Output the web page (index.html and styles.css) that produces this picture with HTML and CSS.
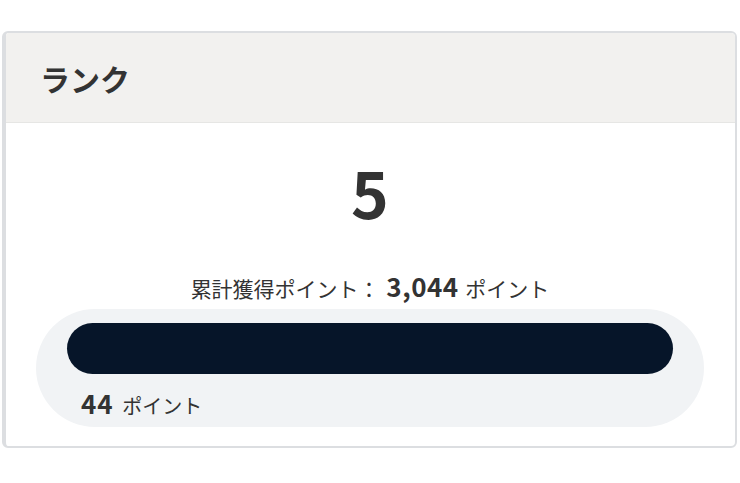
FILE: index.html
```html
<!DOCTYPE html>
<html lang="ja">
<head>
    <meta charset="UTF-8">
    <link rel="stylesheet" href="styles.css">
</head>
<body>
    <div class="rank-card">
        <div class="rank-header">
            <h2>ランク</h2>
        </div>
        <div class="rank-body">
            <div class="rank-value">5</div>
            <p class="total">累計獲得ポイント： <strong>3,044</strong> ポイント</p>
            <div class="track">
                <div class="bar" style="width: 100%"></div>
                <p class="remain"><strong>44</strong> ポイント</p>
            </div>
        </div>
    </div>
</body>
</html>
```

FILE: styles.css
```css
body {
    margin: 0;
    padding: 31px 3px 0 2px;
    font-family: "Noto Sans CJK JP", "Noto Sans", sans-serif;
    color: #333;
    background: #fff;
}
.rank-card {
    border: 2px solid #dcdee1;
    border-left-width: 4px;
    border-radius: 6px;
    overflow: hidden;
    background: #fff;
}
.rank-header {
    background: #f2f1ef;
    height: 89px;
    display: flex;
    align-items: center;
    padding: 0 34px;
    border-bottom: 1px solid #e6e6e4;
}
.rank-header h2 {
    margin: 0;
    font-size: 30px;
    font-weight: 700;
    color: #333;
}
.rank-body {
    padding: 26px 31px 19px 30px;
    text-align: center;
}
.rank-value {
    font-size: 64px;
    font-weight: 700;
    line-height: 84px;
}
.total {
    margin: 38px 0 6px;
    font-size: 21px;
    line-height: 30px;
}
.total strong {
    font-size: 26px;
    letter-spacing: 0.5px;
    margin: 0 2px;
}
.track {
    background: #f1f3f5;
    border-radius: 60px;
    padding: 14px 31px 5px;
    text-align: left;
}
.bar {
    height: 51px;
    background: #061529;
    border-radius: 26px;
}
.remain {
    margin: 13px 0 0 14px;
    font-size: 20px;
    line-height: 32px;
}
.remain strong {
    font-size: 26px;
    letter-spacing: 1px;
    margin-right: 4px;
}
```
